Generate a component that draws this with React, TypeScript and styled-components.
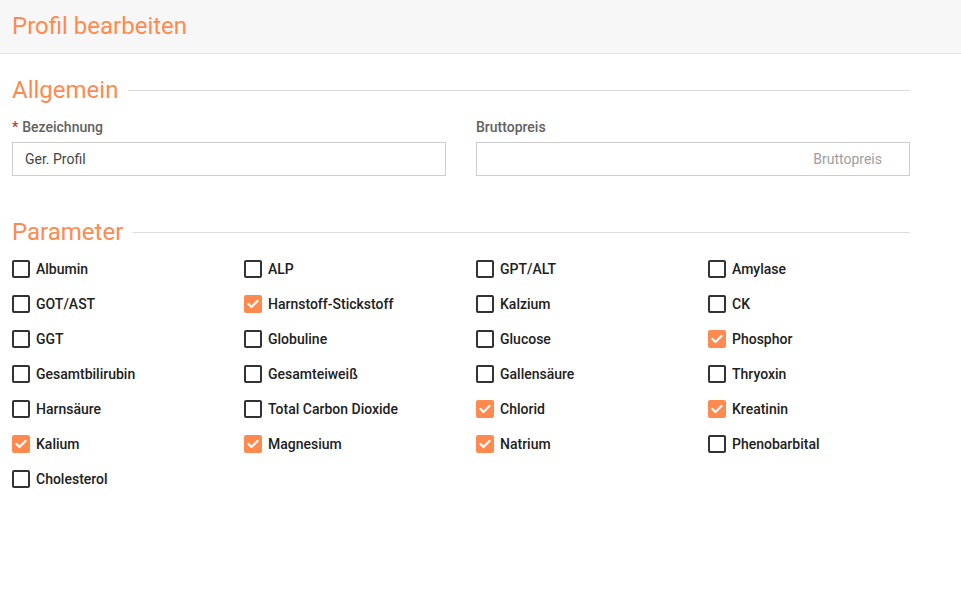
import React from "react";
import styled, { createGlobalStyle } from "styled-components";

const Global = createGlobalStyle`
  html, body { margin: 0; padding: 0; background: #fff; }
  body { font-family: Roboto, "Noto Sans", "Liberation Sans", sans-serif; }
  * { box-sizing: border-box; }
`;

const ORANGE = "#ff8a50";

const Header = styled.header`
  height: 54px;
  background: #f7f7f7;
  border-bottom: 1px solid #e3e3e3;
  display: flex;
  align-items: center;
  padding: 0 12px 2px;
`;

const Title = styled.h1`
  margin: 0;
  font-size: 24px;
  font-weight: 400;
  color: ${ORANGE};
`;

const Content = styled.main`
  padding: 0 51px 0 12px;
`;

const SectionHeading = styled.div<{ $top: number }>`
  display: flex;
  align-items: center;
  gap: 10px;
  margin-top: ${(p) => p.$top}px;
  height: 28px;
  font-size: 24px;
  font-weight: 400;
  color: ${ORANGE};
  &::after {
    content: "";
    flex: 1;
    height: 1px;
    background: #dcdcdc;
  }
`;

const FieldRow = styled.div`
  display: grid;
  grid-template-columns: 1fr 1fr;
  gap: 30px;
  margin-top: 13px;
`;

const Field = styled.div`
  display: flex;
  flex-direction: column;
  gap: 5px;
`;

const Label = styled.label`
  font-size: 14px;
  line-height: 20px;
  font-weight: 500;
  color: #616161;
`;

const Req = styled.span`
  color: #b33a3a;
  margin-right: 4px;
`;

const Input = styled.input<{ $right?: boolean }>`
  height: 34px;
  border: 1px solid #cccccc;
  border-radius: 0;
  padding: 0 ${(p) => (p.$right ? "27px" : "12px")} 0 12px;
  font-family: inherit;
  font-size: 14px;
  color: #444;
  text-align: ${(p) => (p.$right ? "right" : "left")};
  outline: none;
  &::placeholder { color: #9e9e9e; }
`;

const Grid = styled.div`
  display: grid;
  grid-template-columns: repeat(4, 232px);
  margin-top: 5px;
`;

const Item = styled.label`
  display: flex;
  align-items: center;
  gap: 6px;
  height: 35px;
  font-size: 14px;
  font-weight: 500;
  color: #212121;
  cursor: pointer;
`;

const Box = styled.span<{ $checked: boolean }>`
  width: 18px;
  height: 18px;
  border-radius: 2px;
  border: 2px solid ${(p) => (p.$checked ? ORANGE : "#333")};
  background: ${(p) => (p.$checked ? ORANGE : "#fff")};
  display: flex;
  align-items: center;
  justify-content: center;
  flex: none;
`;

const params: [string, boolean][] = [
  ["Albumin", false], ["ALP", false], ["GPT/ALT", false], ["Amylase", false],
  ["GOT/AST", false], ["Harnstoff-Stickstoff", true], ["Kalzium", false], ["CK", false],
  ["GGT", false], ["Globuline", false], ["Glucose", false], ["Phosphor", true],
  ["Gesamtbilirubin", false], ["Gesamteiweiß", false], ["Gallensäure", false], ["Thryoxin", false],
  ["Harnsäure", false], ["Total Carbon Dioxide", false], ["Chlorid", true], ["Kreatinin", true],
  ["Kalium", true], ["Magnesium", true], ["Natrium", true], ["Phenobarbital", false],
  ["Cholesterol", false],
];

const Check = () => (
  <svg width="12" height="10" viewBox="0 0 12 10">
    <polyline points="1.5,5 4.5,8 10.5,2" fill="none" stroke="#fff" strokeWidth="2.2" strokeLinecap="round" strokeLinejoin="round" />
  </svg>
);

export default function App() {
  return (
    <>
      <Global />
      <Header>
        <Title>Profil bearbeiten</Title>
      </Header>
      <Content>
        <SectionHeading $top={22}>Allgemein</SectionHeading>
        <FieldRow>
          <Field>
            <Label><Req>*</Req>Bezeichnung</Label>
            <Input defaultValue="Ger. Profil" />
          </Field>
          <Field>
            <Label>Bruttopreis</Label>
            <Input $right placeholder="Bruttopreis" />
          </Field>
        </FieldRow>
        <SectionHeading $top={42}>Parameter</SectionHeading>
        <Grid>
          {params.map(([name, checked]) => (
            <Item key={name}>
              <Box $checked={checked}>{checked && <Check />}</Box>
              {name}
            </Item>
          ))}
        </Grid>
      </Content>
    </>
  );
}
